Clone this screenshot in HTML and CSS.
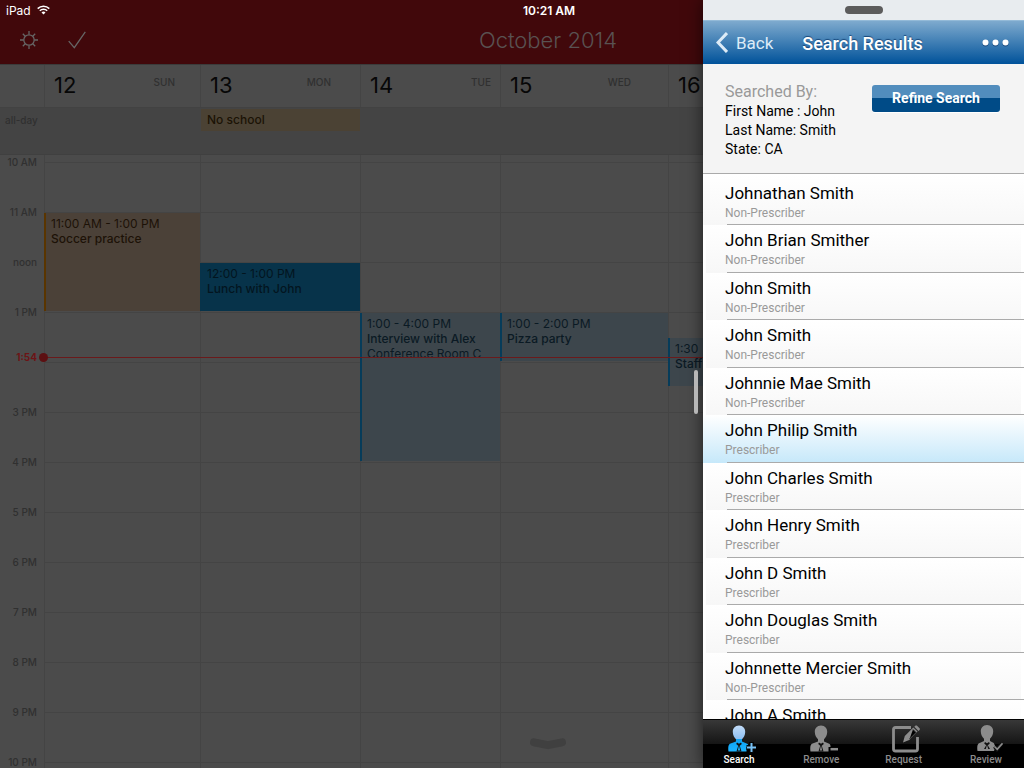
FILE: index.html
```html
<!DOCTYPE html>
<html lang="en">
<head>
<meta charset="utf-8">
<title>Search Results</title>
<link rel="stylesheet" href="styles.css">
</head>
<body>
<main class="calendar">
  <header class="cal-header">
    <div class="status">
      <div class="carrier">iPad
        <svg width="13" height="10" viewBox="0 0 13 10" fill="none" stroke="#fff" stroke-width="1.5"><path d="M.7 3.6a8.2 8.2 0 0 1 11.6 0M2.8 5.8a5.2 5.2 0 0 1 7.4 0"/><path d="M6.5 9.6 4.5 7.5a2.8 2.8 0 0 1 4 0z" fill="#fff" stroke="none"/></svg>
      </div>
      <div class="clock">10:21 AM</div>
    </div>
    <div class="toolbar">
      <div class="tools">
        <button class="tool" aria-label="Settings"><svg width="18" height="18" viewBox="0 0 18 18" fill="none" stroke="currentColor" stroke-width="1.3"><circle cx="9" cy="9" r="5.2"/><path d="M9 0v3.6M9 14.4V18M0 9h3.6M14.4 9H18M2.8 2.8l2.4 2.4M12.8 12.8l2.4 2.4M15.2 2.8l-2.4 2.4M5.2 12.8l-2.4 2.4"/></svg></button>
        <button class="tool" aria-label="Tasks"><svg width="18" height="18" viewBox="0 0 18 18" fill="none" stroke="currentColor" stroke-width="1.3"><path d="M.7 10.2 6.3 16.7 17.3.8"/></svg></button>
      </div>
      <h1 class="month">October 2014</h1>
    </div>
  </header>
  <div class="days cols">
    <div></div>
    <div class="day"><b>12</b><span>SUN</span></div>
    <div class="day"><b>13</b><span>MON</span></div>
    <div class="day"><b>14</b><span>TUE</span></div>
    <div class="day"><b>15</b><span>WED</span></div>
    <div class="day"><b>16</b></div>
  </div>
  <div class="allday cols">
    <div class="allday-label">all-day</div>
    <div></div>
    <div class="allday-event">No school</div>
  </div>
  <div class="hours cols">
    <div class="col c2"></div><div class="col c3"></div><div class="col c4"></div><div class="col c5"></div><div class="col c6"></div>
    <div class="line h10"></div><div class="line h11"></div><div class="line h12"></div><div class="line h13"></div><div class="line h14"></div><div class="line h15"></div><div class="line h16"></div><div class="line h17"></div><div class="line h18"></div><div class="line h19"></div><div class="line h20"></div><div class="line h21"></div><div class="line h22"></div>
    <div class="hour h10">10 AM</div><div class="hour h11">11 AM</div><div class="hour h12">noon</div><div class="hour h13">1 PM</div><div class="hour h15">3 PM</div><div class="hour h16">4 PM</div><div class="hour h17">5 PM</div><div class="hour h18">6 PM</div><div class="hour h19">7 PM</div><div class="hour h20">8 PM</div><div class="hour h21">9 PM</div><div class="hour h22">10 PM</div>
    <div class="event soccer"><p>11:00 AM - 1:00 PM</p><p class="what">Soccer practice</p></div>
    <div class="event lunch"><p>12:00 - 1:00 PM</p><p class="what">Lunch with John</p></div>
    <div class="event blue interview"><div class="clip"><p>1:00 - 4:00 PM</p><p class="what">Interview with Alex</p><p>Conference Room C</p></div></div>
    <div class="event blue pizza"><p>1:00 - 2:00 PM</p><p class="what">Pizza party</p></div>
    <div class="event blue staff"><p>1:30</p><p class="what">Staff</p></div>
    <div class="now-time">1:54</div>
    <div class="now-line"></div>
  </div>
  <svg class="drawer" width="36" height="12" viewBox="0 0 36 12" fill="none" stroke="#404040" stroke-width="8" stroke-linecap="round" stroke-linejoin="round"><path d="M4 4.3 18 7.2 32 4.3"/></svg>
</main>

<div class="divider-grip"></div>
<aside class="panel">
  <div class="grab"><span></span></div>
  <header class="nav">
    <button class="back"><svg width="12" height="21" viewBox="0 0 12 21" fill="none" stroke="currentColor" stroke-width="3"><path d="M11 1 2 10.5 11 20"/></svg>Back</button>
    <h2>Search Results</h2>
    <button class="more" aria-label="More"><svg width="27" height="8" viewBox="0 0 27 8"><g fill="#17477a"><circle cx="3.5" cy="4.6" r="3"/><circle cx="13.5" cy="4.6" r="3"/><circle cx="23.5" cy="4.6" r="3"/></g><g fill="#fff"><circle cx="3.5" cy="3.5" r="3"/><circle cx="13.5" cy="3.5" r="3"/><circle cx="23.5" cy="3.5" r="3"/></g></svg></button>
  </header>
  <section class="criteria">
    <div>
      <h3>Searched By:</h3>
      <p>First Name : John</p>
      <p>Last Name: Smith</p>
      <p>State: CA</p>
    </div>
    <button class="refine">Refine Search</button>
  </section>
  <ul class="results">
    <li><b>Johnathan Smith</b><span>Non-Prescriber</span></li>
    <li><b>John Brian Smither</b><span>Non-Prescriber</span></li>
    <li><b>John Smith</b><span>Non-Prescriber</span></li>
    <li><b>John Smith</b><span>Non-Prescriber</span></li>
    <li><b>Johnnie Mae Smith</b><span>Non-Prescriber</span></li>
    <li class="selected"><b>John Philip Smith</b><span>Prescriber</span></li>
    <li><b>John Charles Smith</b><span>Prescriber</span></li>
    <li><b>John Henry Smith</b><span>Prescriber</span></li>
    <li><b>John D Smith</b><span>Prescriber</span></li>
    <li><b>John Douglas Smith</b><span>Prescriber</span></li>
    <li><b>Johnnette Mercier Smith</b><span>Non-Prescriber</span></li>
    <li><b>John A Smith</b></li>
  </ul>
  <nav class="tabs">
    <button class="tab active">
      <svg width="34" height="28" viewBox="0 0 34 28"><defs><linearGradient id="person" x1="0" y1="0" x2="0" y2="1"><stop offset="0" stop-color="#c3dcf8"/><stop offset=".5" stop-color="#8fc0f2"/><stop offset=".54" stop-color="#0ba2f5"/><stop offset="1" stop-color="#1db4ff"/></linearGradient></defs><path fill="url(#person)" d="M17 .5c4 0 6.400 3 6.200 6.600-.1 3.200-1.400 5.600-3.200 7.200v2.200l5.200 2.200c1.200.6 1.300 1.800 1.300 3.300H24.500v4.500H6.500C6 22 6.300 19.200 8.600 18.500L14 16.500v-2.200c-1.800-1.600-3.100-4-3.200-7.200C10.600 3.500 13 .5 17 .5z"/><path fill="#111" d="m15 17.500 2 1.300 2-1.300.8 1.500-2 1.700 1.700 5.800h-5l1.700-5.800-2-1.700z"/><path fill="#1cb4ff" d="m17 20.500 1.200 5h-2.400z"/><path stroke="#050505" stroke-width="5" d="M29.500 17v11M24.500 22.500h10"/><path stroke="#78c1f5" stroke-width="2" d="M29.500 18v9M25 22.500h9"/></svg>
      Search</button>
    <button class="tab">
      <svg width="34" height="28" viewBox="0 0 34 28"><path fill="#8c8c8c" d="M17 .5c4 0 6.400 3 6.200 6.600-.1 3.200-1.400 5.600-3.200 7.200v2.200l5.200 2.200c1.200.6 1.300 1.800 1.300 3.300H24.500v4.500H6.500C6 22 6.300 19.200 8.600 18.500L14 16.500v-2.200c-1.800-1.600-3.100-4-3.200-7.200C10.600 3.500 13 .5 17 .5z"/><path fill="#111" d="m15 17.500 2 1.300 2-1.300.8 1.500-2 1.700 1.700 5.800h-5l1.700-5.800-2-1.700z"/><path fill="#8c8c8c" d="m17 20.500 1.200 5h-2.400z"/><path stroke="#8c8c8c" stroke-width="2.500" d="M26.500 24.200h8"/></svg>
      Remove</button>
    <button class="tab">
      <svg width="34" height="28" viewBox="0 0 34 28"><path fill="none" stroke="#8c8c8c" stroke-width="2.800" d="M24 2.500H8.500q-2 0-2 2V24q0 2 2 2h20q2 0 2-2V12"/><path fill="#8c8c8c" d="m16 17.500 1.800-6.500L26.300 2.600l4.200 4-8.300 8.500zM27.300 1.700 28.600.5h1.200l3 3v1.200l-1.300 1.200z"/><path stroke="#2b2b2b" stroke-width=".9" d="m26 4.500 3 3-6.500 6.500"/></svg>
      Request</button>
    <button class="tab">
      <svg width="34" height="28" viewBox="0 0 34 28"><path fill="#8c8c8c" d="M18 0c4 0 6.400 3 6.200 6.600-.1 3.200-1.400 5.600-3.200 7.200V16l3.800 2L26.500 22l-1.500 4H8.500C8 21.500 8.300 18.700 10.600 18L15 16v-2.200c-1.800-1.600-3.100-4-3.200-7.200C11.600 3 14 0 18 0z"/><path fill="#111" d="m16 17 2 1.300 2-1.300.8 1.500-2 1.700 2.200 3.800h-6l2.200-3.800-2-1.700z"/><path fill="#8c8c8c" d="m18 20 1.200 4h-2.400z"/><path fill="none" stroke="#111" stroke-width="3.600" d="m25.500 21.500 2.500 3 5-6"/><path fill="none" stroke="#8c8c8c" stroke-width="1.600" d="m25.500 21.500 2.700 2.800 5.300-6"/></svg>
      Review</button>
  </nav>
</aside>
</body>
</html>
```
FILE: styles.css
```css
* { box-sizing: border-box; }
body, h1, h2, h3, p, ul { margin: 0; padding: 0; }
button { border: 0; padding: 0; background: none; font: inherit; color: inherit; }
body {
  position: relative;
  height: 100vh;
  overflow: hidden;
  font-family: Inter, "Liberation Sans", sans-serif;
  background: #4b4b4b;
}

/* Calendar behind the panel */
.calendar { height: 100%; overflow: hidden; color: #070707; }
.cal-header { height: 65px; background: #41080b; border-bottom: 1px solid #3b3b3b; }
.status { display: flex; height: 20px; align-items: center; color: #fff; font-size: 12px; }
.carrier { display: flex; align-items: center; gap: 6px; width: 74px; padding-left: 6px; }
.clock { flex: 1; text-align: center; font-weight: 600; }
.toolbar { display: flex; height: 40px; align-items: center; color: #666; }
.tools { display: flex; gap: 30px; width: 72px; padding-left: 20px; }
.tool { display: flex; flex: none; }
.month { flex: 1; text-align: center; font-size: 22px; font-weight: 300; color: #595252; }

.cols { display: grid; grid-template-columns: 44px 156fr 160fr 140fr 168fr 356fr; }
.days { height: 43px; border-bottom: 1px solid #424242; }
.day { display: flex; justify-content: space-between; border-left: 1px solid #444; padding: 7px 25px 0 9px; }
.day:nth-child(3) { padding-right: 29px; }
.day:nth-child(4) { padding-right: 9px; }
.day:nth-child(5) { padding-right: 37px; }
.day b { font-size: 22px; line-height: 26px; font-weight: 400; }
.day span { font-size: 10px; line-height: 20px; font-weight: 500; color: #303030; }
.allday { height: 47px; background: #444; border-bottom: 1px solid #404040; padding-top: 1px; }
.allday-label { padding-left: 5px; font-size: 10px; line-height: 22px; font-weight: 500; color: #303030; }
.allday-event { height: 22px; margin-left: 1px; padding-left: 6px; background: #4b4234; color: #1b1305; font-size: 12px; line-height: 22px; font-weight: 500; }

.hours { grid-template-rows: 7px repeat(26, 25px); }
.col { grid-row: 1 / -1; border-left: 1px solid #444; }
.c2 { grid-column: 2; } .c3 { grid-column: 3; } .c4 { grid-column: 4; } .c5 { grid-column: 5; } .c6 { grid-column: 6; }
.line { grid-column: 2 / -1; border-top: 1px solid #444; }
.hour { grid-column: 1; height: 14px; margin-top: -7px; padding-right: 7px; text-align: right; font-size: 10px; line-height: 14px; font-weight: 500; color: #303030; }
.h10 { grid-row: 2; } .h11 { grid-row: 4; } .h12 { grid-row: 6; } .h13 { grid-row: 8; } .h14 { grid-row: 10; }
.h15 { grid-row: 12; } .h16 { grid-row: 14; } .h17 { grid-row: 16; } .h18 { grid-row: 18; } .h19 { grid-row: 20; }
.h20 { grid-row: 22; } .h21 { grid-row: 24; } .h22 { grid-row: 26; }
.event { margin: 1px 0; padding: 3px 0 0 5px; border-left: 2px solid; font-size: 12px; line-height: 15px; white-space: nowrap; overflow: hidden; }
.what { font-weight: 500; }
.clip { height: 41px; overflow: hidden; }
.soccer { grid-column: 2; grid-row: 4 / 8; background: #4b4138; border-color: #5a3500; color: #1d1207; }
.lunch { grid-column: 3; grid-row: 6 / 8; background: #07334a; border-color: #07334a; color: #03151f; }
.blue { background: #3d464c; border-color: #063c5a; color: #0b1a24; }
.interview { grid-column: 4; grid-row: 8 / 14; }
.pizza { grid-column: 5; grid-row: 8 / 10; }
.staff { grid-column: 6; grid-row: 9 / 11; }
.now-time { grid-column: 1; grid-row: 9; margin-top: 13px; padding-right: 7px; text-align: right; font-size: 10px; line-height: 14px; font-weight: 700; color: #6d1416; }
.now-line { grid-column: 2 / -1; grid-row: 9; position: relative; height: 1px; margin-top: 20px; background: #6a1a1b; }
.now-line::before { content: ""; position: absolute; left: -5px; top: -4px; width: 9px; height: 9px; border-radius: 50%; background: #5c1012; }
.drawer { position: absolute; bottom: 18px; left: calc(50% + 18px); }

/* Slide-over panel */
.divider-grip { position: absolute; z-index: 2; right: 326px; top: 370px; width: 4px; height: 44px; border-radius: 2px; background: #b7b7b7; }
.panel {
  position: absolute; top: 0; right: 0; bottom: 0;
  display: flex; flex-direction: column;
  width: 321px;
  background: #fff;
  box-shadow: 0 0 16px rgba(0, 0, 0, .6);
  font-family: Roboto, "Liberation Sans", sans-serif;
}
.grab { display: flex; justify-content: center; height: 20px; padding-top: 6px; background: #e8ecef; }
.grab span { width: 38px; height: 8px; border-radius: 4px; background: #5c5c5c; }
.nav { display: grid; grid-template-columns: 1fr auto 1fr; align-items: center; height: 44px; padding: 0 15px 0 13px; color: #fff; background: linear-gradient(#7eaace, #00529a); border-top: 1px solid #93bad8; }
.back { display: flex; align-items: center; gap: 8px; font-size: 17px; color: #dcebf7; }
.nav h2 { font-size: 18px; font-weight: 500; line-height: 20px; padding-top: 2px; text-shadow: 0 -1px 1px #17477a; }
.more { display: flex; justify-self: end; }
.criteria { display: flex; justify-content: space-between; align-items: flex-start; height: 110px; padding: 17px 24px 0 22px; background: #f4f4f4; border-bottom: 1px solid #aaa; color: #000; }
.criteria h3 { font-size: 16px; line-height: 21px; font-weight: 400; color: #999; }
.criteria p { font-size: 14px; line-height: 19px; }
.refine { width: 128px; height: 27px; margin-top: 4px; padding-bottom: 1px; border-radius: 3px; color: #fff; font-size: 14px; font-weight: 700; background: linear-gradient(#528dbd 50%, #004b87 50%); box-shadow: 0 1px 0 #fff; }
.results { flex: 1; min-height: 0; overflow: hidden; list-style: none; }
.results li { position: relative; height: 47px; padding: 5px 0 0 22px; background: linear-gradient(#fff, #f7f7f7) center / calc(100% - 6px) 100% no-repeat; }
.results li:nth-child(even) { height: 48px; }
.results li:first-child { height: 51px; padding-top: 9px; background-size: 100% 100%; }
.results li::after { content: ""; position: absolute; left: 24px; right: 0; bottom: 0; height: 1px; background: #aaa; }
.results b { display: block; font-size: 17px; line-height: 20px; font-weight: 400; color: #000; }
.results span { display: block; margin-top: 3px; font-size: 12px; line-height: 14px; color: #999; }
.results .selected { background: linear-gradient(#fff, #c6e8fa); }
.tabs { display: flex; flex: none; justify-content: space-between; height: 49px; padding-right: 2px; border-top: 1px solid #000; background: linear-gradient(#383838, #151515 24px, #000 24px); }
.tab { display: flex; flex-direction: column; align-items: center; width: 72px; padding-top: 5px; font-size: 10px; line-height: 12px; font-weight: 500; color: #8c8c8c; gap: 1px; }
.active { color: #fff; }
```
